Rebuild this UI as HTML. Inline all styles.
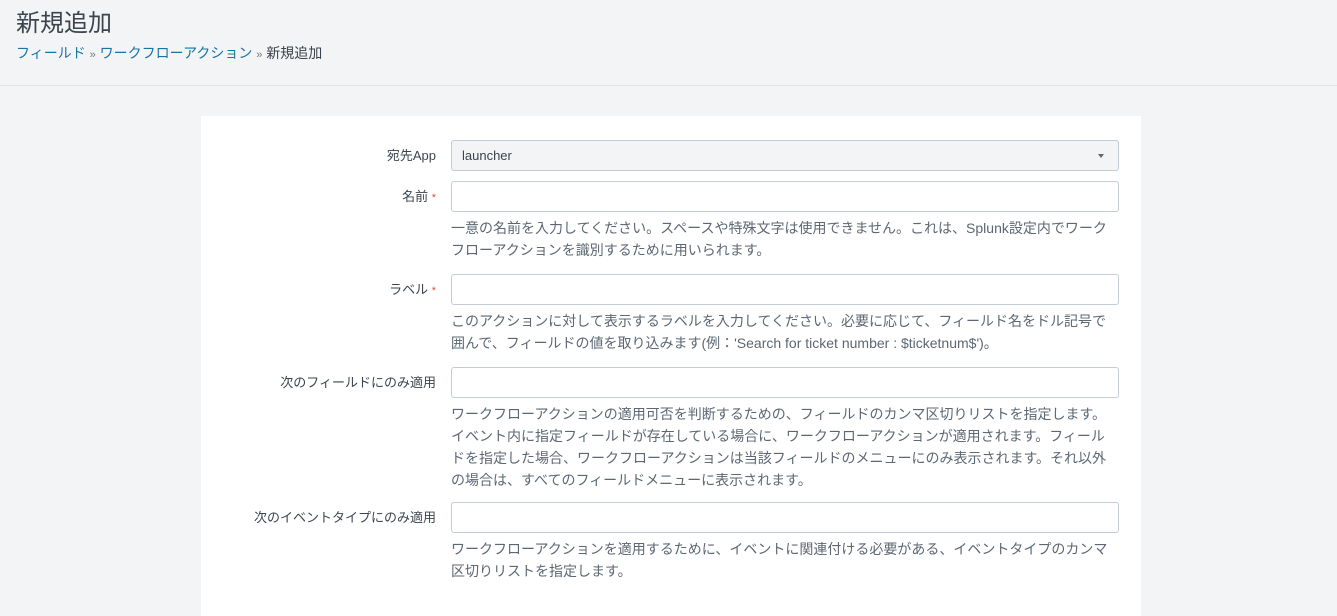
<!DOCTYPE html>
<html><head><meta charset="utf-8"><style>
*{box-sizing:border-box;margin:0;padding:0}
body{width:1337px;height:591px;overflow:hidden;background:#f2f4f5;font-family:"Liberation Sans","Noto Sans CJK JP",sans-serif;color:#3c444d}
.hdr{height:86px;border-bottom:1px solid #e1e4e7;padding:8px 16px}
h1{font-weight:normal;font-size:24px;color:#3c444d;line-height:32px}
.bc{font-size:14px;margin-top:3px;color:#3c444d}
.bc a{color:#1a73a6;text-decoration:none}
.bc span{font-size:11px;color:#777}
.panel{position:absolute;left:201px;top:116px;width:940px;height:500px;background:#fff}
.lab{position:absolute;right:0;width:235px;text-align:right;font-size:13px;color:#3c444d}
.row{position:absolute;left:0;width:940px}
.row .lab{left:0;width:235px;top:5px}
.inp{position:absolute;left:250px;width:668px;height:31px;border:1px solid #c3cbd4;border-radius:3px;background:#fff}
.sel{background:#f2f4f5;font-size:13px;padding:7px 10px;color:#3c444d}
.sel:after{content:"";position:absolute;right:14px;top:13px;border:3px solid transparent;border-top:4px solid #666}
.help{position:absolute;left:250px;top:36px;width:664px;font-size:14px;line-height:22px;color:#5c6773}
.req{color:#d6563c;font-size:11px}
</style></head><body>
<div class="hdr"><h1>新規追加</h1>
<div class="bc"><a>フィールド</a> <span>»</span> <a>ワークフローアクション</a> <span>»</span> 新規追加</div></div>
<div class="panel">
<div class="row" style="top:24px"><div class="lab">宛先App</div><div class="inp sel">launcher</div></div>
<div class="row" style="top:65px"><div class="lab">名前 <span class="req">*</span></div><div class="inp"></div>
<div class="help">一意の名前を入力してください。スペースや特殊文字は使用できません。これは、Splunk設定内でワークフローアクションを識別するために用いられます。</div></div>
<div class="row" style="top:158px"><div class="lab">ラベル <span class="req">*</span></div><div class="inp"></div>
<div class="help">このアクションに対して表示するラベルを入力してください。必要に応じて、フィールド名をドル記号で囲んで、フィールドの値を取り込みます(例：'Search for ticket number : $ticketnum$')。</div></div>
<div class="row" style="top:251px"><div class="lab">次のフィールドにのみ適用</div><div class="inp"></div>
<div class="help">ワークフローアクションの適用可否を判断するための、フィールドのカンマ区切りリストを指定します。イベント内に指定フィールドが存在している場合に、ワークフローアクションが適用されます。フィールドを指定した場合、ワークフローアクションは当該フィールドのメニューにのみ表示されます。それ以外の場合は、すべてのフィールドメニューに表示されます。</div></div>
<div class="row" style="top:386px"><div class="lab">次のイベントタイプにのみ適用</div><div class="inp"></div>
<div class="help">ワークフローアクションを適用するために、イベントに関連付ける必要がある、イベントタイプのカンマ区切りリストを指定します。</div></div>
</div>
</body></html>
